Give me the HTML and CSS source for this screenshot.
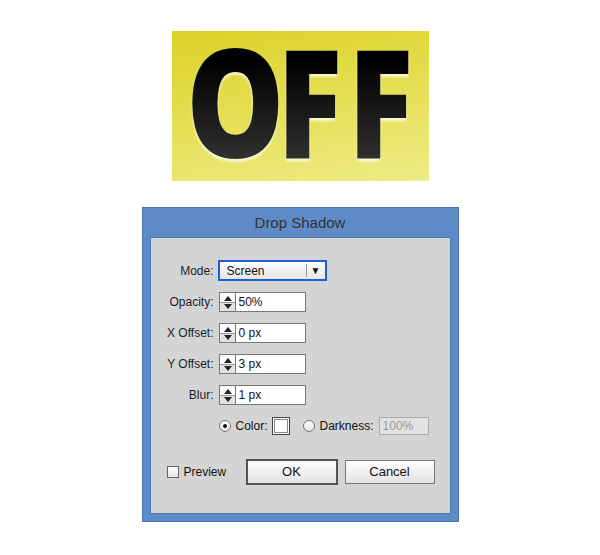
FILE: index.html
```html
<!DOCTYPE html>
<html lang="en">
<head>
  <meta charset="UTF-8" />
  <title>Drop Shadow</title>
  <link rel="stylesheet" href="styles.css">
</head>
<body>
  <div class="preview-art">
    <div class="off-text">
      <div class="slot slot-o"><span class="letter wide">O</span></div>
      <div class="slot slot-f1"><span class="letter">F</span></div>
      <div class="slot slot-f2"><span class="letter">F</span></div>
    </div>
  </div>

  <div class="dialog">
    <div class="dialog-title">Drop Shadow</div>
    <div class="panel">
      <div class="form">
        <label>Mode:</label>
        <div class="select">
          <span class="select-value">Screen</span>
          <span class="select-arrow">&#9660;</span>
        </div>

        <label>Opacity:</label>
        <div class="field"><span class="spin"></span><span class="input">50%</span></div>

        <label>X Offset:</label>
        <div class="field"><span class="spin"></span><span class="input">0 px</span></div>

        <label>Y Offset:</label>
        <div class="field"><span class="spin"></span><span class="input">3 px</span></div>

        <label>Blur:</label>
        <div class="field"><span class="spin"></span><span class="input">1 px</span></div>

        <div class="color-row">
          <span class="radio checked"></span>
          <span class="color-label">Color:</span>
          <span class="swatch"><span></span></span>
          <span class="radio"></span>
          <span class="dark-label">Darkness:</span>
          <span class="input disabled">100%</span>
        </div>
      </div>

      <div class="actions">
        <span class="checkbox"></span>
        <span class="check-label">Preview</span>
        <button class="btn btn-default">OK</button>
        <button class="btn">Cancel</button>
      </div>
    </div>
  </div>
</body>
</html>
```

FILE: styles.css
```css
body {
  margin: 0;
  padding: 0;
  background: #fff;
  font-family: "Liberation Sans", Arial, sans-serif;
  font-size: 12px;
  color: #111;
}
.preview-art {
  width: 257px;
  height: 150px;
  margin: 31px auto 0;
  background: linear-gradient(170deg, #dbd227 0%, #e4de50 45%, #efeb86 100%);
  overflow: hidden;
}
.off-text {
  display: flex;
  font-family: "Open Sans", sans-serif;
  font-weight: 800;
  font-size: 151px;
  line-height: 137px;
  filter: drop-shadow(0 3px 1px rgba(255, 255, 240, 0.75));
}
.slot {
  flex: none;
  white-space: nowrap;
}
.slot-o {
  margin-left: 14px;
  width: 91px;
}
.slot-f1 {
  width: 71px;
}
.slot-f2 {
  width: 70px;
}
.letter {
  display: inline-block;
  transform-origin: left center;
  transform: scaleX(0.8);
  background: linear-gradient(#000 20%, #343434 100%);
  -webkit-background-clip: text;
  background-clip: text;
  color: transparent;
}
.letter.wide {
  transform: scaleX(0.82);
}
.dialog {
  width: 301px;
  margin: 26px auto 0;
  padding: 0 7px 7px;
  background: #5d8bc8;
  border: 1px solid #4a73ae;
}
.dialog-title {
  height: 29px;
  line-height: 29px;
  text-align: center;
  font-size: 15px;
  color: #333;
}
.panel {
  height: 275px;
  background: #d4d4d4;
  border: 1px solid #4d77b2;
}
.form {
  display: grid;
  grid-template-columns: 63px 1fr;
  column-gap: 4px;
  row-gap: 11px;
  padding-top: 22px;
  align-items: center;
}
.form label {
  text-align: right;
  color: #1c1c28;
}
.select {
  width: 105px;
  height: 17px;
  border: 2px solid #1d5fd3;
  background: linear-gradient(#fdfdfd, #e6e6e6);
  display: flex;
  align-items: center;
}
.select-value {
  flex: 1;
  padding-left: 7px;
}
.select-arrow {
  width: 18px;
  border-left: 1px solid #999;
  height: 13px;
  line-height: 13px;
  text-align: center;
  font-size: 10px;
  color: #111;
}
.field {
  display: flex;
  height: 20px;
  margin-left: 1px;
}
.spin {
  width: 15px;
  border: 1px solid #777;
  border-right: none;
  background: linear-gradient(#fafafa 0, #fafafa 48%, #999 48%, #999 54%, #e2e2e2 54%);
  position: relative;
}
.spin::before,
.spin::after {
  content: "";
  position: absolute;
  left: 4px;
  border-left: 4px solid transparent;
  border-right: 4px solid transparent;
}
.spin::before {
  top: 3px;
  border-bottom: 5px solid #222;
}
.spin::after {
  bottom: 2px;
  border-top: 5px solid #222;
}
.input {
  width: 66px;
  border: 1px solid #777;
  background: #fff;
  padding-left: 3px;
  line-height: 18px;
  box-sizing: content-box;
}
.color-row {
  grid-column: 2;
  display: flex;
  align-items: center;
  height: 18px;
  margin-top: 1px;
  margin-left: 1px;
}
.radio {
  width: 10px;
  height: 10px;
  border: 1px solid #777;
  border-radius: 50%;
  background: linear-gradient(#fff, #e4e4e4);
  position: relative;
}
.radio.checked::after {
  content: "";
  position: absolute;
  left: 3px;
  top: 3px;
  width: 4px;
  height: 4px;
  border-radius: 50%;
  background: #111;
}
.color-label {
  margin: 0 4px 0 5px;
}
.swatch {
  width: 14px;
  height: 14px;
  border: 1px solid #444;
  padding: 1px;
  background: #fff;
  margin-right: 13px;
}
.swatch span {
  display: block;
  width: 12px;
  height: 12px;
  border: 1px solid #888;
  background: #fff;
}
.dark-label {
  margin: 0 5px 0 5px;
}
.input.disabled {
  width: 45px;
  height: 16px;
  line-height: 16px;
  border-color: #aaa;
  background: #e2e2e2;
  color: #999;
}
.actions {
  display: flex;
  align-items: center;
  margin-top: 24px;
  padding-left: 16px;
  height: 25px;
}
.checkbox {
  width: 10px;
  height: 10px;
  border: 1px solid #666;
  background: linear-gradient(#fff, #e4e4e4);
}
.check-label {
  margin-left: 5px;
  width: 62px;
}
.btn {
  font-family: "Liberation Sans", Arial, sans-serif;
  font-size: 13px;
  color: #111;
  width: 90px;
  height: 24px;
  padding: 0;
  border: 1px solid #777;
  background: linear-gradient(#fdfdfd, #e3e3e3);
}
.btn-default {
  width: 92px;
  height: 26px;
  border: 2px solid #555;
  margin-right: 7px;
}
```
